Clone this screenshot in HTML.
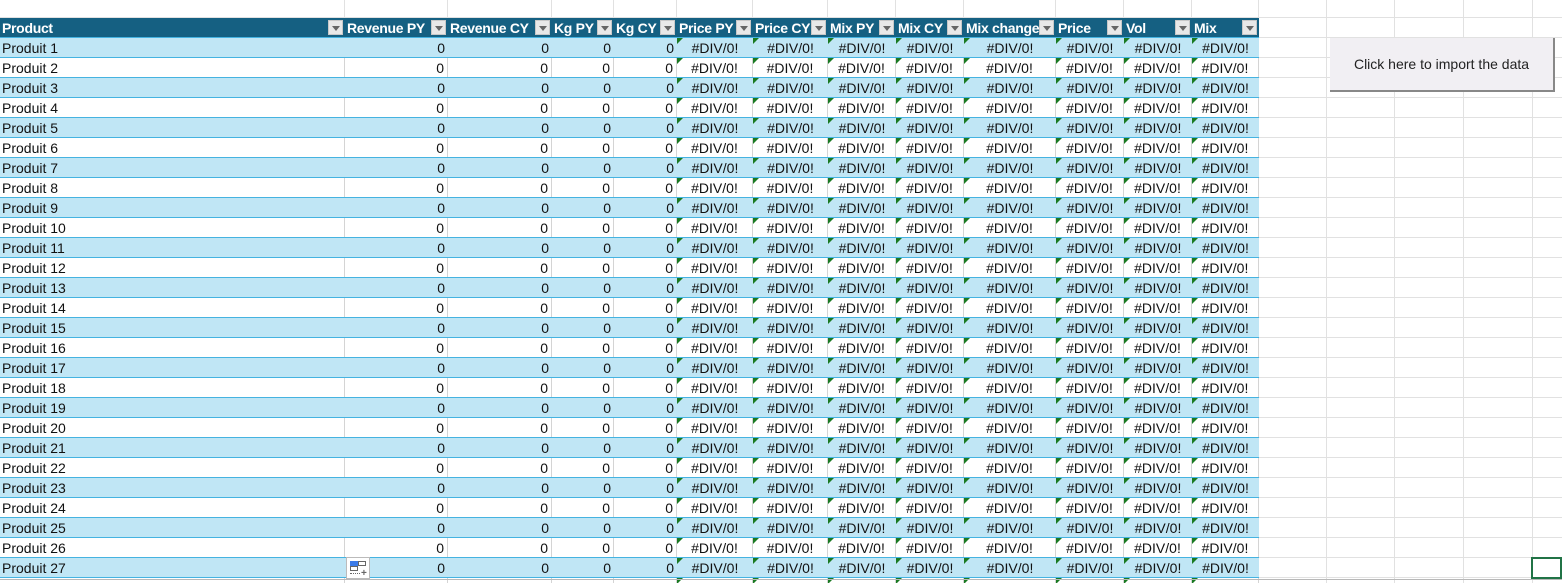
<!DOCTYPE html>
<html style="width:1562px;height:583px;overflow:hidden"><head><meta charset="utf-8"><style>
body{margin:0;width:1562px;height:583px;overflow:hidden;background:#fff;font-family:"Liberation Sans",Arial,sans-serif;position:relative}
.a{position:absolute}
.vl{position:absolute;width:1px;background:#e1e1e1}
.hl{position:absolute;height:1px;background:#e1e1e1}
.hd{position:absolute;top:18px;height:20px;background:#156082;color:#fff;font-weight:bold;font-size:14px;line-height:20px;overflow:hidden;white-space:nowrap;box-sizing:border-box;border-bottom:1px solid #44b3e1}
.hd span{padding-left:2px;letter-spacing:-0.3px}
.dd{position:absolute;right:2px;top:2px;width:15px;height:15px;background:#e8e8e8;border:1px solid #c8c8c8;box-sizing:border-box}
.dd:after{content:"";position:absolute;left:3px;top:5px;border-left:4px solid transparent;border-right:4px solid transparent;border-top:5px solid #666}
.row{position:absolute;left:0;width:1259px;height:20px;box-sizing:border-box;border-bottom:1px solid #44b3e1}
.c{position:absolute;top:0;height:19px;line-height:20px;font-size:14px;color:#111;white-space:nowrap;box-sizing:border-box}
.w .c{border-right:1px solid #d4d4d4}
.tri{position:absolute;left:0;top:0;width:0;height:0;border-top:6px solid #1a7a22;border-right:6px solid transparent}
</style></head><body>
<div id="g" style="position:absolute;left:0;top:0;width:1562px;height:583px;overflow:hidden"></div>
<div class="a" style="left:1330px;top:38px;width:225px;height:54px;background:#f1eff3;border-right:2px solid #888;border-bottom:2px solid #888;box-sizing:border-box;font-size:14px;line-height:52px;text-align:center;color:#222">Click here to import the data</div>
<div class="a" style="left:0;top:579px;width:1562px;height:1px;background:#b8b8b8"></div>
<div class="a" style="left:1531px;top:557px;width:31px;height:22px;border:2px solid #217346;box-sizing:border-box"></div>
<div class="a" style="left:346px;top:557px;width:24px;height:22px;background:#fff;border:1px solid #bbb;box-sizing:border-box">
 <div class="a" style="left:3px;top:3px;width:8px;height:5px;background:#3b7be8"></div>
 <div class="a" style="left:11px;top:3px;width:8px;height:5px;border:1px solid #666;box-sizing:border-box"></div>
 <div class="a" style="left:3px;top:8px;width:8px;height:5px;border:1px solid #666;box-sizing:border-box"></div>
 <div class="a" style="left:3px;top:15px;width:10px;height:1px;border-top:1px dotted #666"></div>
 <div class="a" style="left:14px;top:11px;font-size:10px;line-height:10px;color:#666;font-weight:bold">+</div>
</div>
<script>
(function(){
var E=[0,345,448,552,614,677,753,828,896,964,1056,1124,1192,1259];
var H=["Product","Revenue PY","Revenue CY","Kg PY","Kg CY","Price PY","Price CY","Mix PY","Mix CY","Mix change","Price","Vol","Mix"];
var h="";
for(var i=1;i<E.length;i++)h+='<div class="vl" style="left:'+(E[i]-1)+'px;top:0;height:18px"></div>';
[1327,1395,1464,1533].forEach(function(x){h+='<div class="vl" style="left:'+(x-1)+'px;top:0;height:583px"></div>'});
h+='<div class="hl" style="left:0;top:17px;width:1562px"></div>';
for(var y=37;y<583;y+=20)h+='<div class="hl" style="left:1259px;top:'+y+'px;width:303px"></div>';
for(var i=0;i<13;i++){h+='<div class="hd" style="left:'+E[i]+'px;width:'+(E[i+1]-E[i])+'px"><span>'+H[i]+'</span><div class="dd"></div></div>';}
for(var r=1;r<=28;r++){
 var ty=18+20*r;var band=r%2==1;
 h+='<div class="row '+(band?'':'w')+'" style="top:'+ty+'px;background:'+(band?'#c0e6f5':'#fff')+'">';
 for(var i=0;i<13;i++){
  var w=E[i+1]-E[i];var st='left:'+E[i]+'px;width:'+w+'px;';
  var t,al;
  if(i==0){t='Produit '+r;al='text-align:left;padding-left:2px;';}
  else if(i<5){t='0';al='text-align:right;padding-right:3px;';}
  else{t='#DIV/0!';al='text-align:center;';}
  h+='<div class="c" style="'+st+al+'">'+(i>=5?'<div class="tri"></div>':'')+(r==28?'':t)+'</div>';
 }
 h+='</div>';
}
document.getElementById('g').innerHTML=h;
})();
</script>
</body></html>
